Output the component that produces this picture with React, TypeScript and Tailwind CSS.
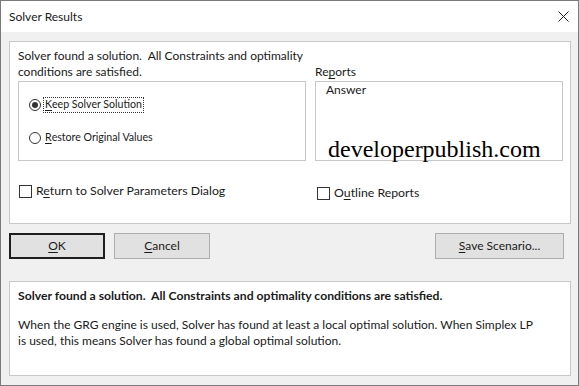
const Radio = ({ checked, label, ul, focus }: { checked?: boolean; label: string; ul: number; focus?: boolean }) => {
  return (
    <div className="flex items-center h-[16px]">
      <span className="w-[12px] h-[12px] rounded-full border border-[#333333] bg-white flex items-center justify-center">
        {checked && <span className="w-[6px] h-[6px] rounded-full bg-[#333333]" />}
      </span>
      <span
        className={
          "ml-[2px] px-[2px] h-[16px] flex items-center text-[10.6px] " +
          (focus ? "outline outline-1 outline-dotted outline-[#333333] -outline-offset-1" : "")
        }
      >
        {label.slice(0, ul)}
        <span className="underline underline-offset-2">{label[ul]}</span>
        {label.slice(ul + 1)}
      </span>
    </div>
  );
};

const Check = ({ label, ul }: { label: string; ul: number }) => {
  return (
    <div className="flex items-center">
      <span className="w-[13px] h-[13px] border border-[#333333] bg-white" />
      <span className="ml-[4px] text-[12.3px] leading-[16px]">
        {label.slice(0, ul)}
        <span className="underline underline-offset-2">{label[ul]}</span>
        {label.slice(ul + 1)}
      </span>
    </div>
  );
};

const Btn = ({ label, ul, w, def }: { label: string; ul: number; w: string; def?: boolean }) => {
  return (
    <button
      className={
        "h-[26px] bg-[#e1e1e1] text-[12px] flex items-center justify-center " +
        w +
        (def ? " border-2 border-[#1e1e1e]" : " border border-[#adadad]")
      }
    >
      {label.slice(0, ul)}
      <span className="underline underline-offset-2">{label[ul]}</span>
      {label.slice(ul + 1)}
    </button>
  );
};

const App = () => {
  return (
    <div className="w-[579px] h-[386px] border border-[#7a7a7a] bg-[#f0f0f0] flex flex-col font-[Lato,sans-serif] text-[#1a1a1a]">
      <div className="h-[31px] bg-white flex items-center justify-between pl-[8px] pr-[9px]">
        <span className="text-[12px]">Solver Results</span>
        <svg width="11" height="11" viewBox="0 0 11 11" stroke="#222" strokeWidth="1" fill="none">
          <path d="M0.5 0.5L10.5 10.5M10.5 0.5L0.5 10.5" />
        </svg>
      </div>

      <div className="flex flex-col pl-[8px] pr-[7px]">
        <section className="mt-[9px] h-[183px] bg-white border border-[#c8c8c8] pl-[8px] pt-[6px] flex flex-col">
          <p className="text-[12px] leading-[16px]">Solver found a solution.&nbsp; All Constraints and optimality</p>
          <div className="flex gap-[9px]">
            <div className="w-[288px] flex flex-col">
              <p className="text-[12px] leading-[16px]">conditions are satisfied.</p>
              <div className="mt-[1px] h-[80px] border border-[#c8c8c8] pl-[10px] pt-[15px] flex flex-col gap-[17px]">
                <Radio checked focus label="Keep Solver Solution" ul={0} />
                <Radio label="Restore Original Values" ul={0} />
              </div>
            </div>
            <div className="w-[248px] flex flex-col">
              <p className="text-[12px] leading-[16px]">
                Re<span className="underline underline-offset-2">p</span>orts
              </p>
              <div className="relative mt-[1px] h-[80px] border border-[#c8c8c8] pl-[10px]">
                <p className="text-[12px] leading-[16px]">Answer</p>
                <span className="absolute left-[12px] bottom-[-3px] font-['Liberation_Serif',serif] text-[24px] leading-[28px] text-black">
                  developerpublish.com
                </span>
              </div>
            </div>
          </div>
          <div className="flex mt-[22px]">
            <div className="w-[298px] pl-[1px]">
              <Check label="Return to Solver Parameters Dialog" ul={1} />
            </div>
            <div className="pl-[1px] mt-[2px]">
              <Check label="Outline Reports" ul={1} />
            </div>
          </div>
        </section>

        <div className="mt-[9px] flex">
          <Btn label="OK" ul={0} w="w-[96px]" def />
          <div className="ml-[9px]">
            <Btn label="Cancel" ul={0} w="w-[96px]" />
          </div>
          <div className="ml-auto mr-[7px]">
            <Btn label="Save Scenario..." ul={0} w="w-[129px]" />
          </div>
        </div>

        <section className="mt-[22px] h-[95px] bg-white border border-[#c8c8c8] pl-[8px] pt-[6px]">
          <p className="text-[12.2px] leading-[16px] font-bold">
            Solver found a solution.&nbsp; All Constraints and optimality conditions are satisfied.
          </p>
          <p className="mt-[13px] text-[12px] leading-[16px]">
            When the GRG engine is used, Solver has found at least a local optimal solution. When Simplex LP
            <br />
            is used, this means Solver has found a global optimal solution.
          </p>
        </section>
      </div>
    </div>
  );
};

export default App;
